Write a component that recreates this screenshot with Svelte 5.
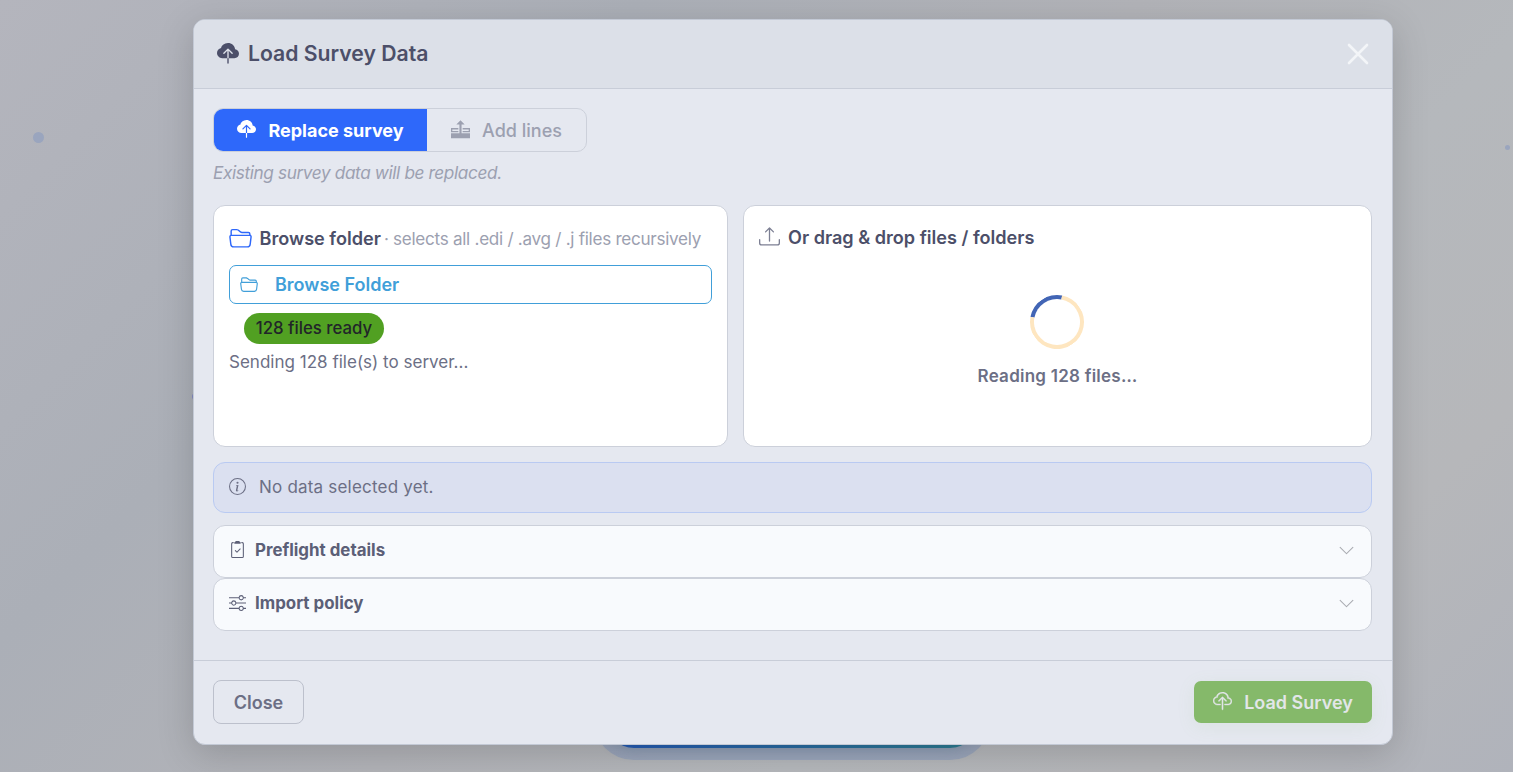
<script lang="ts">
  interface Section {
    title: string;
    icon: string;
  }

  const icons: Record<string, string> = {
    cloudFill:
      'M8 0a5.53 5.53 0 0 0-3.594 1.342c-.766.66-1.321 1.52-1.464 2.383C1.266 4.095 0 5.555 0 7.318 0 9.366 1.708 11 3.781 11H7.5V5.707L5.354 7.854a.5.5 0 1 1-.708-.708l3-3a.5.5 0 0 1 .708 0l3 3a.5.5 0 0 1-.708.708L8.5 5.707V11h4.188C14.502 11 16 9.57 16 7.773c0-1.636-1.242-2.969-2.834-3.194C12.923 1.999 10.69 0 8 0m-.5 14.5V11h1v3.5a.5.5 0 0 1-1 0',
    cloud:
      'M4.406 1.342A5.53 5.53 0 0 1 8 0c2.69 0 4.923 2 5.166 4.579C14.758 4.804 16 6.137 16 7.773 16 9.569 14.502 11 12.687 11H10a.5.5 0 0 1 0-1h2.688C13.979 10 15 8.988 15 7.773c0-1.216-1.02-2.228-2.313-2.228h-.5v-.5C12.188 2.825 10.328 1 8 1a4.53 4.53 0 0 0-2.941 1.1c-.757.652-1.153 1.438-1.153 2.055v.448l-.445.049C2.064 4.805 1 5.952 1 7.318 1 8.785 2.23 10 3.781 10H6a.5.5 0 0 1 0 1H3.781C1.708 11 0 9.366 0 7.318c0-1.763 1.266-3.223 2.942-3.593.143-.863.698-1.723 1.464-2.383M7.646 4.146a.5.5 0 0 1 .708 0l3 3a.5.5 0 0 1-.708.708L8.5 5.707V14.5a.5.5 0 0 1-1 0V5.707L5.354 7.854a.5.5 0 1 1-.708-.708z',
    addLines:
      'M8 .2l3.500 3.600H8.900V11.200H16v4.200H0v-4.200h7.100V3.800H4.500zM0 6.800h6.200v1.200H1.100v1.200h5.100v1.100H0zM9.800 6.800H16v3.500H9.800V9.200h5.100V8H9.800z',
    folder:
      'M1 3.5A1.5 1.5 0 0 1 2.500 2h2.764c.958 0 1.760.560 2.311 1.184C7.985 3.648 8.480 4 9 4h4.500A1.5 1.5 0 0 1 15 5.500v.640c.570.265.940.876.856 1.546l-.640 5.124A2.5 2.5 0 0 1 12.733 15H3.266a2.5 2.5 0 0 1-2.481-2.190l-.640-5.124A1.5 1.5 0 0 1 1 6.140zM2 6h12v-.5a.5.5 0 0 0-.5-.5H9c-.964 0-1.710-.629-2.174-1.154C6.374 3.334 5.820 3 5.264 3H2.500a.5.5 0 0 0-.5.5zm-.367 1a.5.5 0 0 0-.496.562l.640 5.124A1.5 1.5 0 0 0 3.266 14h9.468a1.5 1.5 0 0 0 1.489-1.314l.640-5.124A.5.5 0 0 0 14.367 7z',
    upload:
      'M.5 9.900a.5.5 0 0 1 .5.5v2.500a1 1 0 0 0 1 1h12a1 1 0 0 0 1-1v-2.500a.5.5 0 0 1 1 0v2.500a2 2 0 0 1-2 2H2a2 2 0 0 1-2-2v-2.500a.5.5 0 0 1 .5-.5M7.646 1.146a.5.5 0 0 1 .708 0l3 3a.5.5 0 0 1-.708.708L8.500 2.707V11.500a.5.5 0 0 1-1 0V2.707L5.354 4.854a.5.5 0 1 1-.708-.708z',
    info:
      'M8 15A7 7 0 1 1 8 1a7 7 0 0 1 0 14m0 1A8 8 0 1 0 8 0a8 8 0 0 0 0 16M8.930 6.588l-2.290.287-.082.380.450.083c.294.070.352.176.288.469l-.738 3.468c-.194.897.105 1.319.808 1.319.545 0 1.178-.252 1.465-.598l.088-.416c-.2.176-.492.246-.686.246-.275 0-.375-.193-.304-.533zM9 4.500a1 1 0 1 1-2 0 1 1 0 0 1 2 0',
    clipboard:
      'M9.500 0a.5.5 0 0 1 .5.5.5.5 0 0 0 .5.5.5.5 0 0 1 .5.5V2a.5.5 0 0 1-.5.5h-5A.5.5 0 0 1 5 2v-.5a.5.5 0 0 1 .5-.5.5.5 0 0 0 .5-.5.5.5 0 0 1 .5-.5zM3 2.500a.5.5 0 0 1 .5-.5H4a.5.5 0 0 0 0-1h-.5A1.5 1.5 0 0 0 2 2.500v12A1.5 1.5 0 0 0 3.500 16h9a1.5 1.5 0 0 0 1.500-1.500v-12A1.5 1.5 0 0 0 12.500 1H12a.5.5 0 0 0 0 1h.5a.5.5 0 0 1 .5.5v12a.5.5 0 0 1-.5.5h-9a.5.5 0 0 1-.5-.5zM10.854 7.854a.5.5 0 0 0-.708-.708L7.500 9.793 6.354 8.646a.5.5 0 1 0-.708.708l1.500 1.500a.5.5 0 0 0 .708 0z',
    sliders:
      'M11.500 2a1.5 1.5 0 1 0 0 3 1.5 1.5 0 0 0 0-3M9.050 3a2.5 2.5 0 0 1 4.900 0H16v1h-2.050a2.5 2.5 0 0 1-4.900 0H0V3zM4.500 7a1.5 1.5 0 1 0 0 3 1.5 1.5 0 0 0 0-3M2.050 8a2.5 2.5 0 0 1 4.900 0H16v1H6.950a2.5 2.5 0 0 1-4.900 0H0V8zm9.450 4a1.5 1.5 0 1 0 0 3 1.5 1.5 0 0 0 0-3m-2.450 1a2.5 2.5 0 0 1 4.900 0H16v1h-2.050a2.5 2.5 0 0 1-4.900 0H0v-1z',
    chevron:
      'M1.646 4.646a.5.5 0 0 1 .708 0L8 10.293l5.646-5.647a.5.5 0 0 1 .708.708l-6 6a.5.5 0 0 1-.708 0l-6-6a.5.5 0 0 1 0-.708'
  };

  const sections: Section[] = [
    { title: 'Preflight details', icon: 'clipboard' },
    { title: 'Import policy', icon: 'sliders' }
  ];

  let mode = $state<'replace' | 'add'>('replace');
  const fileCount = 128;
</script>

{#snippet icon(name: string, size: number)}
  <svg class="icon" width={size} height={size} viewBox="0 0 16 16" fill="currentColor" aria-hidden="true">
    <path d={icons[name]} />
  </svg>
{/snippet}

<div class="page">
  <span class="dot dot-left"></span>
  <span class="dot dot-edge"></span>
  <span class="dot dot-right"></span>
  <span class="hero-button"></span>

  <div class="modal" role="dialog" aria-label="Load Survey Data">
    <header>
      <h5>{@render icon('cloudFill', 22)}<span>Load Survey Data</span></h5>
      <button class="dismiss" aria-label="Dismiss">
        <svg width="22" height="22" viewBox="0 0 22 22" fill="none" stroke="currentColor" stroke-width="2.6" stroke-linecap="round">
          <path d="M2 2l18 18M20 2L2 20" />
        </svg>
      </button>
    </header>

    <div class="body">
      <div class="modes">
        <button class:active={mode === 'replace'} onclick={() => (mode = 'replace')}>
          {@render icon('cloudFill', 19)}<span>Replace survey</span>
        </button>
        <button class:active={mode === 'add'} onclick={() => (mode = 'add')}>
          {@render icon('addLines', 19)}<span>Add lines</span>
        </button>
      </div>
      <p class="hint">Existing survey data will be replaced.</p>

      <div class="sources">
        <section class="card browse">
          <div class="card-title">
            {@render icon('folder', 23)}<strong>Browse folder</strong>
            <span class="note">· selects all .edi / .avg / .j files recursively</span>
          </div>
          <button class="browse-btn">{@render icon('folder', 18)}<span>Browse Folder</span></button>
          <span class="badge">{fileCount} files ready</span>
          <div class="sending">Sending {fileCount} file(s) to server...</div>
        </section>

        <section class="card drop">
          <div class="card-title">
            {@render icon('upload', 21)}<strong>Or drag &amp; drop files / folders</strong>
          </div>
          <div class="loading">
            <span class="spinner"></span>
            <span class="reading">Reading {fileCount} files…</span>
          </div>
        </section>
      </div>

      <div class="notice">{@render icon('info', 17)}<span>No data selected yet.</span></div>

      {#each sections as section}
        <button class="section">
          {@render icon(section.icon, 17)}
          <span class="section-title">{section.title}</span>
          <span class="chevron">{@render icon('chevron', 17)}</span>
        </button>
      {/each}
    </div>

    <footer>
      <button class="close-btn">Close</button>
      <button class="load-btn">{@render icon('cloud', 19)}<span>Load Survey</span></button>
    </footer>
  </div>
</div>

<style>
  :global(body) {
    overflow: hidden;
  }

  .page {
    position: relative;
    box-sizing: border-box;
    width: 100vw;
    height: 100vh;
    padding: 19px 0 0 193px;
    overflow: hidden;
    font-family: Inter, sans-serif;
    color: #4c4f69;
    background: linear-gradient(135deg, #b4b5bd 0%, #abafb7 28%, #b2b3b8 50%, #b5b8bc 68%, #b6b7ba 84%, #b0b3bb 100%);
  }

  .page * {
    box-sizing: border-box;
  }

  button {
    font-family: inherit;
    margin: 0;
    padding: 0;
    border: 0;
    background: none;
    color: inherit;
  }

  .icon {
    display: block;
    flex: none;
  }

  .dot {
    position: absolute;
    border-radius: 50%;
    background: #9aa5be;
  }

  .dot-left {
    left: 33px;
    top: 132px;
    width: 11px;
    height: 11px;
  }

  .dot-edge {
    left: 192px;
    top: 393px;
    width: 7px;
    height: 7px;
    background: #8389c2;
  }

  .dot-right {
    left: 1505px;
    top: 145px;
    width: 5px;
    height: 5px;
  }

  .hero-button {
    position: absolute;
    left: 605px;
    top: 690px;
    width: 374px;
    height: 58px;
    border-radius: 29px;
    background: linear-gradient(90deg, #2459b5, #2c7c90);
    box-shadow:
      0 0 14px rgba(70, 110, 140, 0.35),
      0 0 0 12px rgba(120, 142, 190, 0.4);
  }

  .modal {
    position: relative;
    display: flex;
    flex-direction: column;
    width: 1200px;
    height: 726px;
    border: 1px solid #c3c9d5;
    border-radius: 12px;
    background: #e5e8f0;
    box-shadow: 0 9px 36px rgba(0, 0, 0, 0.17);
    overflow: hidden;
  }

  header {
    display: flex;
    align-items: center;
    justify-content: space-between;
    height: 69px;
    padding: 0 23px;
    border-bottom: 1px solid #c8cdd8;
    background: #dce0e8;
  }

  h5 {
    display: flex;
    align-items: center;
    gap: 9px;
    margin: 0;
    font-size: 21.2px;
    font-weight: 600;
  }

  h5 .icon {
    margin-top: -1px;
  }

  h5 span {
    padding-bottom: 2px;
  }

  .dismiss {
    color: #f3f5f8;
    line-height: 0;
  }

  .body {
    flex: 1;
    padding: 19px 20px 0 19px;
  }

  .modes {
    display: flex;
    width: 374px;
    height: 44px;
    border: 1px solid #ccd0da;
    border-radius: 10px;
    overflow: hidden;
  }

  .modes button {
    display: flex;
    flex: 1;
    align-items: center;
    justify-content: center;
    gap: 12px;
    color: #9ca0b0;
    font-size: 18px;
    font-weight: 500;
  }

  .modes .icon {
    margin-top: -1px;
  }

  .modes button.active {
    flex: 0 0 213px;
    background: #2e68fa;
    color: #fff;
    font-weight: 700;
  }

  .hint {
    margin: 10px 0 0;
    color: #9ca0b0;
    font-size: 17.2px;
    font-style: italic;
    letter-spacing: -0.37px;
    line-height: 22px;
  }

  .sources {
    display: grid;
    grid-template-columns: 515px 1fr;
    gap: 15px;
    margin-top: 21px;
  }

  .card {
    height: 242px;
    padding: 20px 15px;
    border: 1px solid #ccd0da;
    border-radius: 12px;
    background: #fff;
  }

  .card-title {
    display: flex;
    align-items: center;
    height: 24px;
    font-size: 18.1px;
    white-space: nowrap;
  }

  .card-title strong {
    margin-left: 7.5px;
    font-weight: 600;
  }

  .browse .icon {
    margin-top: -2px;
    color: #2e68fa;
  }

  .note {
    margin-left: 3px;
    color: #9ca0b0;
    font-size: 17.1px;
    letter-spacing: -0.28px;
  }

  .browse-btn {
    display: flex;
    align-items: center;
    gap: 17px;
    width: 483px;
    height: 39px;
    margin-top: 15px;
    padding-left: 10px;
    border: 1px solid #419fd9;
    border-radius: 7px;
    color: #419fd9;
    font-size: 18px;
    font-weight: 600;
  }

  .browse-btn .icon {
    color: #419fd9;
  }

  .badge {
    display: flex;
    align-items: center;
    justify-content: center;
    width: 140px;
    height: 31px;
    margin: 9px 0 0 15px;
    padding-bottom: 2px;
    border-radius: 16px;
    background: #51a022;
    color: #212529;
    font-size: 16.8px;
    font-weight: 500;
  }

  .sending {
    margin-top: 7px;
    color: #6c6f85;
    font-size: 17.05px;
    line-height: 22px;
  }

  .drop {
    padding-top: 19px;
  }

  .drop .icon {
    margin-top: -1px;
    color: #7c7f93;
  }

  .drop .card-title strong {
    margin-left: 8px;
  }

  .loading {
    display: flex;
    flex-direction: column;
    align-items: center;
    margin-top: 46px;
  }

  .spinner {
    width: 54px;
    height: 54px;
    margin-right: 1px;
    border: 4px solid #fee6c0;
    border-top-color: #4265b5;
    border-radius: 50%;
    transform: rotate(-34deg);
  }

  .reading {
    margin-top: 16px;
    color: #6c6f85;
    font-size: 17px;
    font-weight: 600;
    letter-spacing: 0.25px;
    line-height: 22px;
  }

  .notice {
    display: flex;
    align-items: center;
    gap: 13px;
    height: 51px;
    margin: 15px 0 12px;
    padding: 0 0 2px 15px;
    border: 1px solid #b9caf2;
    border-radius: 12px;
    background: #dbe0f0;
    color: #6c6f85;
    font-size: 17px;
    letter-spacing: 0.2px;
  }

  .section {
    display: flex;
    align-items: center;
    gap: 9px;
    width: 100%;
    height: 53px;
    padding: 0 16px 3px 15px;
    border: 1px solid #ccd0da;
    border-radius: 12px;
    background: #f8fafd;
    color: #5c5f77;
    font-size: 16.9px;
    font-weight: 700;
  }

  .section > .icon {
    margin-top: -2px;
  }

  .chevron {
    margin-left: auto;
    padding-top: 1px;
    color: #a9abb1;
  }

  footer {
    display: flex;
    align-items: center;
    justify-content: space-between;
    height: 84px;
    padding: 0 20px 2px 19px;
    border-top: 1px solid #c8cdd8;
  }

  .close-btn {
    width: 91px;
    height: 44px;
    padding-top: 2px;
    border: 1px solid #bcc0cc;
    border-radius: 8px;
    color: #6c6f85;
    font-size: 18px;
    font-weight: 600;
  }

  .load-btn {
    display: flex;
    align-items: center;
    justify-content: center;
    gap: 12px;
    width: 178px;
    height: 42px;
    padding-top: 2px;
    border-radius: 7px;
    background: #85b96a;
    box-shadow: 0 4px 18px rgba(133, 185, 106, 0.1);
    color: #e2e6e8;
    font-size: 18px;
    font-weight: 600;
  }

  .load-btn .icon {
    margin-top: -2px;
    stroke: currentColor;
    stroke-width: 0.3;
  }
</style>
